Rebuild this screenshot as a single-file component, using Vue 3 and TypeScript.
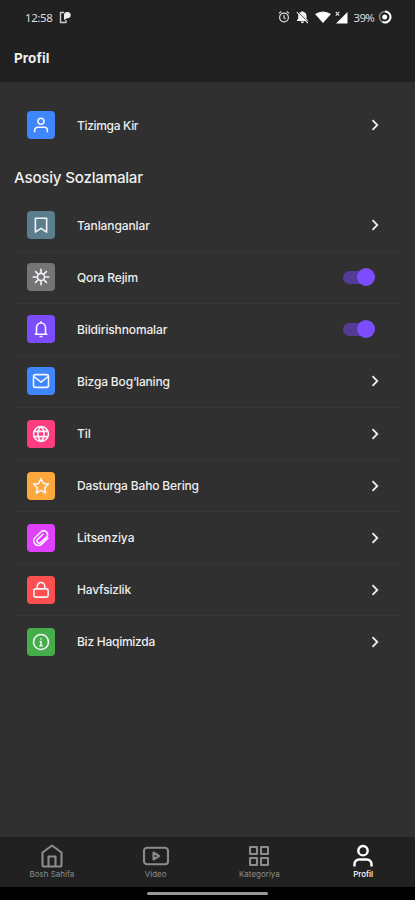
<script setup lang="ts">
import { ref } from 'vue'

interface Row {
  label: string
  color: string
  icon: string
  spacing: number
  toggle?: boolean
}

const icons: Record<string, string> = {
  user: 'M12 3a4 4 0 1 0 0 8a4 4 0 1 0 0-8M3.5 21.5v-2.5a4 4 0 0 1 4-4h9a4 4 0 0 1 4 4v2.5',
  bookmark: 'M4.5 3h15v18.5L12 16.5l-7.5 5z',
  sun: 'M12 7.2a4.8 4.8 0 1 0 0 9.6a4.8 4.8 0 1 0 0-9.6M12 1v5M12 18v5M1 12h5M18 12h5M4.2 4.2l3.6 3.6M16.2 16.2l3.6 3.6M4.2 19.8l3.6-3.6M16.2 7.8l3.6-3.6',
  bell: 'M3.5 19h17M6 19v-9a6 6 0 0 1 12 0v9M12 4V1.5M10 22h4',
  mail: 'M4.5 3.5h15a2.5 2.5 0 0 1 2.5 2.5v12a2.5 2.5 0 0 1-2.5 2.5h-15A2.5 2.5 0 0 1 2 18V6a2.5 2.5 0 0 1 2.5-2.5M2.5 6L12 13.5L21.5 6',
  globe: 'M12 2a10 10 0 1 0 0 20a10 10 0 1 0 0-20M12 2c-5.5 5-5.5 15 0 20M12 2c5.5 5 5.5 15 0 20M3.5 8.5h17M3.5 15.5h17',
  star: 'M12 2l3 6.6l7 .8l-5.2 4.9l1.4 7.1L12 17.8l-6.2 3.6l1.4-7.1L2 9.4l7-.8z',
  clip: 'M21.8 11.5l-8.8 8.6a6.2 6.2 0 0 1-8.8-8.8l8.4-8a5 5 0 0 1 7 7l-8.1 7.9a3 3 0 0 1-4.2-4.2l8-7.6',
  lock: 'M5 10.5h14a2.5 2.5 0 0 1 2.5 2.5v6a2.5 2.5 0 0 1-2.5 2.5H5A2.5 2.5 0 0 1 2.5 19v-6A2.5 2.5 0 0 1 5 10.5M7 10.5V7a5 5 0 0 1 10 0v3.5',
  info: 'M12 2a10 10 0 1 0 0 20a10 10 0 1 0 0-20M12 7v1.8M10.3 11.5H12V17M9.8 17h4.4',
}

const login: Row = { label: 'Tizimga Kir', color: '#3e86fa', icon: 'user', spacing: -0.33 }

const rows = ref<Row[]>([
  { label: 'Tanlanganlar', color: '#5c7d8b', icon: 'bookmark', spacing: -0.1 },
  { label: 'Qora Rejim', color: '#757575', icon: 'sun', spacing: -0.15, toggle: true },
  { label: 'Bildirishnomalar', color: '#7c4dff', icon: 'bell', spacing: -0.13, toggle: true },
  { label: 'Bizga Bog‘laning', color: '#3e86fa', icon: 'mail', spacing: -0.17 },
  { label: 'Til', color: '#fc3d80', icon: 'globe', spacing: -0.1 },
  { label: 'Dasturga Baho Bering', color: '#fca83c', icon: 'star', spacing: -0.15 },
  { label: 'Litsenziya', color: '#df40fb', icon: 'clip', spacing: -0.05 },
  { label: 'Havfsizlik', color: '#fc5050', icon: 'lock', spacing: -0.2 },
  { label: 'Biz Haqimizda', color: '#46ad4b', icon: 'info', spacing: -0.26 },
])

const tabs = [
  { label: 'Bosh Sahifa', path: 'M2.5 8.5L12 1.5l9.5 7V21a1.5 1.5 0 0 1-1.5 1.5H4A1.5 1.5 0 0 1 2.5 21zM8.5 22V12.5h7V22' },
  { label: 'Video', path: 'M3 3.8h18a3 3 0 0 1 3 3v10.4a3 3 0 0 1-3 3H3a3 3 0 0 1-3-3V6.800a3 3 0 0 1 3-3M9.500 8.500v7L15 12z' },
  { label: 'Kategoriya', path: 'M3 3h7v7H3zM14 3h7v7h-7zM3 14h7v7H3zM14 14h7v7h-7z' },
  { label: 'Profil', path: 'M12 2a4.700 4.700 0 1 0 0 9.400a4.700 4.700 0 1 0 0-9.400M3.500 22.500V20a4.500 4.500 0 0 1 4.500-4.500h8a4.500 4.500 0 0 1 4.500 4.500v2.500' },
]
const active = ref('Profil')
</script>

<template>
  <div class="screen">
    <header>
      <div class="status">
        <span class="time">12:58</span>
        <svg class="app-mark" viewBox="0 0 12 13">
          <path d="M5 1.500H1.500v10H7V9" fill="none" stroke="#ccc" stroke-width="1.400" stroke-linejoin="round" />
          <path d="M8 1a3.200 3.200 0 0 1 3.700 3.500A3.300 3.300 0 0 1 8 7.200L5 9V4A3 3 0 0 1 8 1" fill="#eee" />
        </svg>
        <div class="signals">
          <svg width="12" height="14" viewBox="0 0 12 14" fill="none" stroke="#ddd" stroke-width="1.200">
            <circle cx="6" cy="7.500" r="4.400" /><path d="M6 5v3l1.600 1M1 3.400L3.200 1.500M11 3.400L8.800 1.500" />
          </svg>
          <svg width="13" height="14" viewBox="0 0 13 14">
            <path d="M1 11V9.900l1.200-1.200V6c0-2.200 1-3.500 2.800-3.900a1.400 1.400 0 0 1 2.600 0C9.400 2.500 10.500 4 10.500 6v2.700l1.300 1.200V11zM4.800 11.600h3.200a1.600 1.600 0 0 1-3.200 0" fill="#f3f3f3" />
            <path d="M.8 2.200L12 13" stroke="#eee" stroke-width="1.100" /><path d="M1.700 1.800L12.800 12.400" stroke="#212121" stroke-width=".7" />
          </svg>
          <svg class="wifi" width="16" height="12" viewBox="0 0 16 12"><path d="M0 3Q8-2 16 3L8 12z" fill="#fff" /></svg>
          <svg class="cell" width="13" height="13" viewBox="0 0 13 13">
            <path d="M12.500 1v11.500H1z" fill="#fff" /><path d="M.8 1l3.400 3.600M4.200 1L.8 4.600" stroke="#ddd" stroke-width="1.100" />
          </svg>
          <span class="percent">39%</span>
          <svg width="14" height="14" viewBox="0 0 14 14" fill="none">
            <circle cx="7" cy="7" r="5.500" stroke="#888" stroke-width="1.400" />
            <path d="M7 1.500a5.500 5.500 0 1 1-2.500 10.400" stroke="#fff" stroke-width="2" /><circle cx="6.700" cy="7" r="2.500" fill="#fff" />
          </svg>
        </div>
      </div>
      <h1>Profil</h1>
    </header>

    <main>
      <div class="row login">
        <span class="tile" :style="{ background: login.color }"><svg viewBox="0 0 24 24"><path :d="icons[login.icon]" /></svg></span>
        <span class="label" :style="{ letterSpacing: login.spacing + 'px' }">{{ login.label }}</span>
        <svg class="chevron" viewBox="0 0 8 12"><path d="M1.500 1.200L6.300 6l-4.800 4.800" /></svg>
      </div>
      <h2>Asosiy Sozlamalar</h2>
      <div class="list">
        <div v-for="row in rows" :key="row.label" class="row">
          <span class="tile" :style="{ background: row.color }"><svg viewBox="0 0 24 24"><path :d="icons[row.icon]" /></svg></span>
          <span class="label" :style="{ letterSpacing: row.spacing + 'px' }">{{ row.label }}</span>
          <span v-if="row.toggle" class="switch"><i></i></span>
          <svg v-else class="chevron" viewBox="0 0 8 12"><path d="M1.500 1.200L6.300 6l-4.800 4.800" /></svg>
        </div>
      </div>
    </main>

    <nav>
      <a v-for="tab in tabs" :key="tab.label" :class="{ active: active === tab.label }" @click="active = tab.label">
        <svg viewBox="-1 0 26 24"><path :d="tab.path" /></svg>
        <span>{{ tab.label }}</span>
      </a>
    </nav>
    <footer><i></i></footer>
  </div>
</template>

<style>
body {
  background: #303030;
}
</style>

<style scoped>
.screen {
  box-sizing: border-box;
  height: 900px;
  display: flex;
  flex-direction: column;
  overflow: hidden;
  background: #303030;
  color: #eee;
  font-family: Inter, sans-serif;
}
header {
  height: 82px;
  flex: none;
  background: #212121;
}
.status {
  height: 34px;
  display: flex;
  align-items: center;
  padding: 0 23px 0 25px;
  font-family: 'Noto Sans', sans-serif;
  font-size: 11.5px;
  color: #ddd;
}
.time {
  width: 34px;
  letter-spacing: -0.4px;
}
.app-mark {
  width: 12px;
  height: 13px;
}
.signals {
  margin-left: auto;
  display: flex;
  align-items: center;
}
.signals svg {
  margin-right: 6px;
}
.signals .wifi {
  margin-right: 4px;
}
.signals svg:last-child {
  margin-right: 0;
}
.percent {
  width: 24.5px;
  letter-spacing: -0.7px;
}
h1 {
  margin: 15px 0 0 14px;
  font-size: 13.5px;
  line-height: 18px;
  font-weight: 700;
  letter-spacing: 0.1px;
}
main {
  flex: 1;
  min-height: 0;
}
.row {
  height: 52.1px;
  box-sizing: border-box;
  margin: 0 14px;
  padding: 0 20px 0 13px;
  display: flex;
  align-items: center;
}
.list .row {
  border-bottom: 1px solid #363636;
}
.list .row:last-child {
  border-bottom-color: transparent;
}
.login {
  margin-top: 17px;
}
.tile {
  width: 28px;
  height: 28px;
  flex: none;
  border-radius: 4px;
  display: flex;
  align-items: center;
  justify-content: center;
}
.tile svg {
  width: 18px;
  height: 18px;
  fill: none;
  stroke: #f4f4fa;
  stroke-width: 2.1;
  stroke-linejoin: round;
}
.label {
  margin-left: 22px;
  flex: 1;
  font-size: 12px;
  font-weight: 500;
  white-space: nowrap;
}
.chevron {
  width: 8px;
  height: 12px;
  margin-right: 2.5px;
  fill: none;
  stroke: #eee;
  stroke-width: 1.8;
}
.switch {
  width: 29px;
  height: 13px;
  margin-right: 9px;
  border-radius: 7px;
  background: #553b98;
  display: flex;
  align-items: center;
  justify-content: flex-end;
}
.switch i {
  width: 18px;
  height: 18px;
  flex: none;
  margin-right: -3px;
  border-radius: 50%;
  background: #7c4dff;
}
h2 {
  margin: 16px 0 11.5px 14px;
  font-size: 15.2px;
  line-height: 21px;
  font-weight: 500;
  letter-spacing: -0.24px;
}
nav {
  height: 50px;
  flex: none;
  display: grid;
  grid-template-columns: repeat(4, 1fr);
  background: #212121;
}
nav a {
  display: flex;
  flex-direction: column;
  align-items: center;
  padding-top: 7px;
  color: #8c8c8c;
}
nav svg {
  width: 26px;
  height: 24px;
  fill: none;
  stroke: currentColor;
  stroke-width: 2.1;
  stroke-linejoin: round;
}
nav span {
  font-size: 8px;
  line-height: 12px;
}
nav .active {
  color: #fff;
}
nav .active svg {
  stroke-width: 2.4;
}
nav .active span {
  font-weight: 500;
}
footer {
  height: 13px;
  flex: none;
  background: #000;
  display: flex;
  justify-content: center;
  align-items: center;
}
footer i {
  width: 121px;
  height: 3px;
  border-radius: 2px;
  background: #999;
}
</style>
